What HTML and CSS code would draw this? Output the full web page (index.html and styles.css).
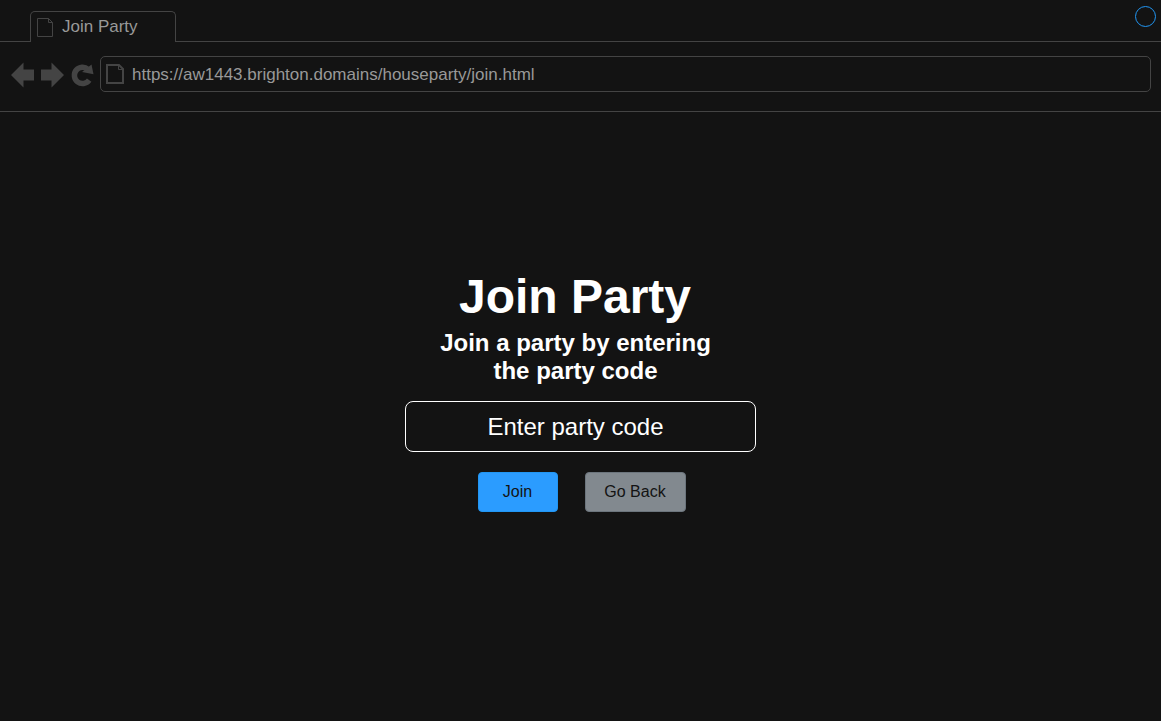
FILE: index.html
```html
<!DOCTYPE html>
<html lang="en">
<head>
<meta charset="utf-8">
<title>Join Party</title>
<link rel="stylesheet" href="styles.css">
</head>
<body>
<div class="browser">
  <header class="tab-strip">
    <div class="tab">
      <svg class="tab-icon" width="18" height="20" viewBox="0 0 18 20" fill="none" stroke="#444"><path d="M1.500 1.500h11l4 4v14h-15z"/><path d="M12.500 1.500v4h4"/></svg>
      <span>Join Party</span>
    </div>
    <svg class="status" width="22" height="22" viewBox="0 0 22 22" fill="none" stroke="#2196f3"><circle cx="10.500" cy="11.500" r="10"/></svg>
  </header>
  <nav class="toolbar">
    <button class="nav-button" type="button" aria-label="Back"><svg width="24" height="26" viewBox="0 0 24 26" fill="#444"><path d="M0 13L12.500 .5v7H23v11H12.500v7z"/></svg></button>
    <button class="nav-button" type="button" aria-label="Forward"><svg width="24" height="26" viewBox="0 0 24 26" fill="#444"><path d="M23 13L10.500 .5v7H0v11h10.500v7z"/></svg></button>
    <button class="nav-button" type="button" aria-label="Reload"><svg width="24" height="26" viewBox="0 0 24 26"><path d="M18.200 18.200A8.200 8.200 0 1 1 17 7.200" fill="none" stroke="#444" stroke-width="5.500"/><path d="M20.500 2.500l2 9.700-11.500-2.200z" fill="#444"/></svg></button>
    <label class="address">
      <svg width="18" height="20" viewBox="0 0 18 20" fill="none" stroke="#444" stroke-width="2"><path d="M1 1h12l4 4v14H1z"/><path d="M12.500 1v4.500h4.500" stroke-width="1"/></svg>
      <input class="address-input" type="text" aria-label="Address" value="https://aw1443.brighton.domains/houseparty/join.html">
    </label>
  </nav>
  <main class="page">
    <form class="join">
      <h1 class="title">Join Party</h1>
      <h2 class="subtitle">Join a party by entering the party code</h2>
      <input class="code" type="text" aria-label="Party code" placeholder="Enter party code">
      <div class="actions">
        <button class="button button-join" type="button">Join</button>
        <button class="button button-back" type="button">Go Back</button>
      </div>
    </form>
  </main>
</div>
</body>
</html>
```
FILE: styles.css
```css
* {
  box-sizing: border-box;
}

body {
  margin: 0;
  background: #131313;
  color: #fff;
  font-family: "Liberation Sans", Arial, sans-serif;
}

svg {
  display: block;
  flex: none;
}

.browser {
  display: flex;
  flex-direction: column;
  min-height: 100vh;
}

.tab-strip {
  display: flex;
  justify-content: space-between;
  padding: 11px 4px 0 30px;
  border-bottom: 1px solid #444;
}

.tab {
  display: flex;
  align-items: center;
  gap: 8px;
  width: 146px;
  height: 31px;
  margin-bottom: -1px;
  padding-left: 5px;
  border: 1px solid #444;
  border-bottom: 0;
  border-radius: 5px 5px 0 0;
  background: #131313;
  color: #999;
  font-size: 17px;
}

.status {
  margin-top: -6px;
}

.toolbar {
  display: flex;
  align-items: center;
  gap: 6px;
  padding: 14px 10px 19px 11px;
  border-bottom: 1px solid #444;
}

.nav-button {
  padding: 2px 0 0;
  border: 0;
  background: none;
}

.address {
  display: flex;
  flex: 1;
  align-items: center;
  gap: 8px;
  height: 36px;
  margin-left: -1px;
  padding: 0 5px;
  border: 1px solid #444;
  border-radius: 5px;
}

.address-input {
  flex: 1;
  min-width: 0;
  padding: 2px 0 0;
  border: 0;
  outline: 0;
  background: none;
  color: #999;
  font-family: inherit;
  font-size: 17px;
}

.page {
  display: flex;
  flex: 1;
  justify-content: center;
  padding: 157px 16px 24px;
}

.join {
  width: 100%;
  max-width: 351px;
}

.title,
.subtitle {
  margin: 0;
  text-align: center;
}

.title {
  padding-right: 11px;
  font-size: 48px;
  line-height: 56px;
}

.subtitle {
  padding: 4px 35px 0 25px;
  font-size: 24px;
  line-height: 28px;
}

.code {
  display: block;
  width: 100%;
  height: 51px;
  margin: 16px 0 20px;
  padding: 0 10px 0 0;
  border: 1px solid #fff;
  border-radius: 8px;
  background: none;
  color: #fff;
  font-family: inherit;
  font-size: 24px;
  text-align: center;
}

.code::placeholder {
  color: #fff;
  opacity: 1;
}

.actions {
  display: flex;
  justify-content: center;
  gap: 27px;
  padding-left: 2px;
}

.button {
  height: 40px;
  padding: 0;
  border: 1px solid;
  border-radius: 4px;
  color: #131313;
  font-family: inherit;
  font-size: 16px;
}

.button-join {
  width: 80px;
  border-color: #2196f3;
  background: #2b9cff;
}

.button-back {
  width: 101px;
  border-color: #6c757d;
  background: #82898f;
}
```
